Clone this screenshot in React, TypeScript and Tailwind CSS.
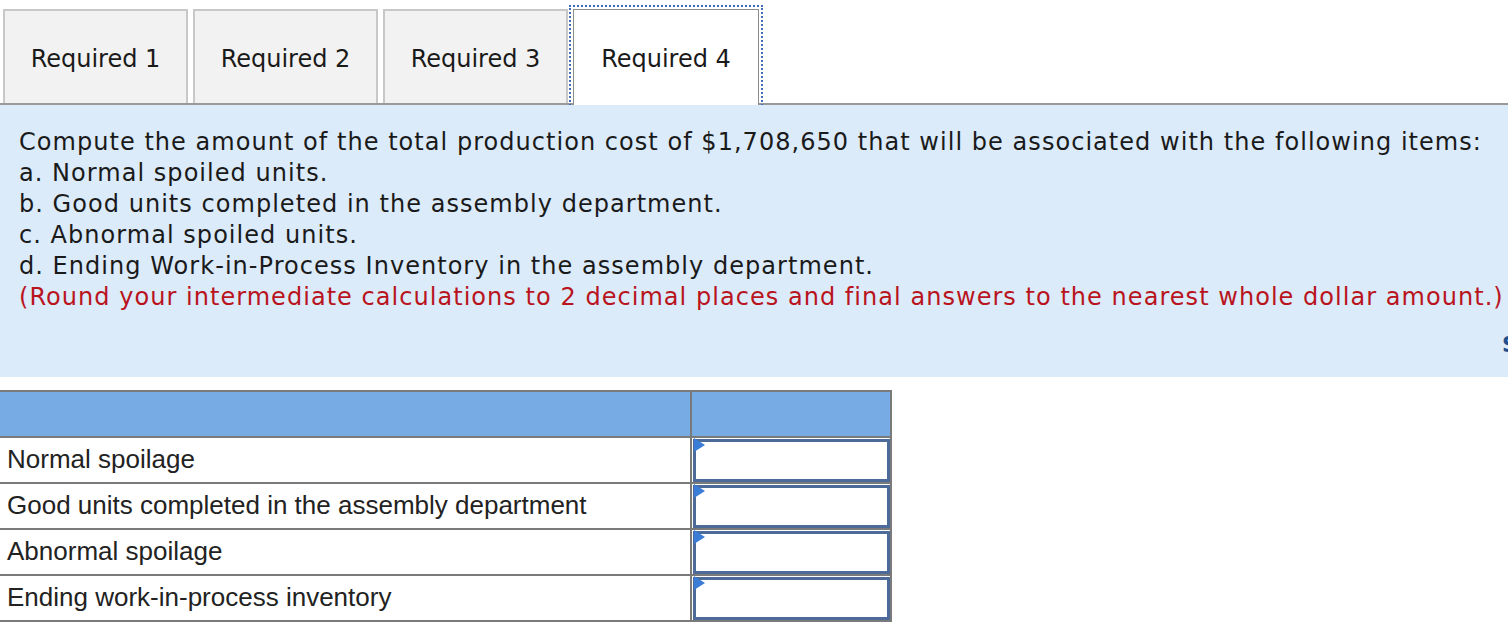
const tabs = ["Required 1", "Required 2", "Required 3", "Required 4"];

const rows = [
  "Normal spoilage",
  "Good units completed in the assembly department",
  "Abnormal spoilage",
  "Ending work-in-process inventory",
];

function InputCell() {
  return (
    <td className="relative h-[46px] w-[200px] border-2 border-[#7a7a7a] p-0">
      <div className="mx-auto h-[43px] w-[197px] border-[3px] border-[#4d6b98] bg-white" />
      <span className="absolute left-[2px] top-0 z-10 h-0 w-0 border-y-[7px] border-l-[11px] border-y-transparent border-l-[#3a7cd6]" />
    </td>
  );
}

export default function App() {
  return (
    <div className="min-h-screen overflow-hidden bg-white font-['DejaVu_Sans',Verdana,sans-serif] text-[#1a1a1a]">
      <div className="flex gap-[5px] border-b-2 border-[#999] pl-[3px] pt-[9px]">
        {tabs.map((t, i) =>
          i === 3 ? (
            <div
              key={t}
              className="-mb-[2px] flex h-[96px] w-[186px] items-center justify-center border border-b-0 border-[#8c8c8c] bg-white pt-[2px] text-[24px] outline-2 outline-offset-2 outline-dotted outline-[#3c6fb8]"
            >
              {t}
            </div>
          ) : (
            <div
              key={t}
              className="flex h-[94px] w-[185px] items-center justify-center border-2 border-b-0 border-[#c8c8c8] bg-[#f2f2f2] pt-[4px] text-[24px]"
            >
              {t}
            </div>
          )
        )}
      </div>

      <div className="relative h-[272px] overflow-hidden bg-[#dbebf9] pl-[19px] pt-[22px] text-[24px] leading-[31px] tracking-[1.04px]">
        <p>
          Compute the amount of the total production cost of $1,708,650 that
          will be associated with the following items:
        </p>
        <p>a. Normal spoiled units.</p>
        <p>b. Good units completed in the assembly department.</p>
        <p>c. Abnormal spoiled units.</p>
        <p>d. Ending Work-in-Process Inventory in the assembly department.</p>
        <p className="whitespace-nowrap text-[#b9141d]">
          (Round your intermediate calculations to 2 decimal places and final
          answers to the nearest whole dollar amount.)
        </p>
        <span className="absolute left-[1502px] top-[224px] whitespace-nowrap text-[22px] font-bold tracking-normal text-[#1f4e8c]">
          Show less
        </span>
      </div>

      <div className="pt-[13px]">
        <table className="-ml-[2px] border-collapse font-['Liberation_Sans',Arial,sans-serif] text-[26px] text-[#222]">
          <tbody>
            <tr className="h-[46px] bg-[#77abe3]">
              <td className="w-[692px] border-2 border-[#7a7a7a]" />
              <td className="w-[200px] border-2 border-[#7a7a7a]" />
            </tr>
            {rows.map((r) => (
              <tr key={r} className="h-[46px]">
                <td className="border-2 border-[#7a7a7a] pb-[3px] pl-[7px] leading-none">
                  {r}
                </td>
                <InputCell />
              </tr>
            ))}
          </tbody>
        </table>
      </div>
    </div>
  );
}
